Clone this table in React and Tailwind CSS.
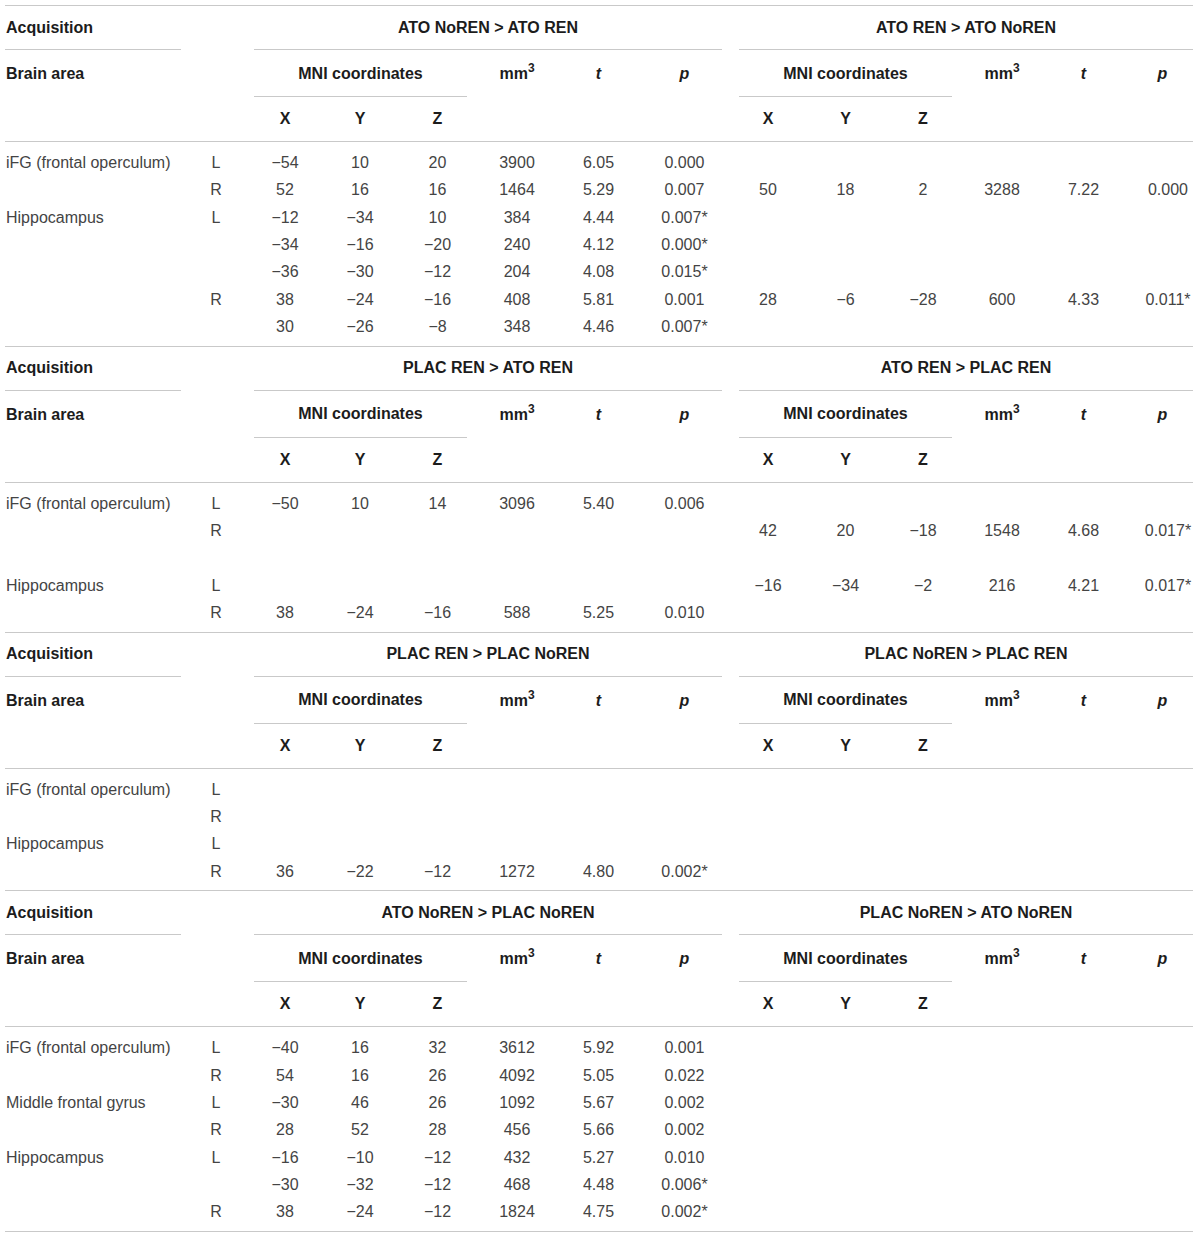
import React from 'react';

const cols = 'grid grid-cols-[184px_64px_74px_76px_79px_80px_83px_89px_78px_77px_78px_80px_83px_75px]';
const M = '\u2212';

const sections = [
  {
    left: 'ATO NoREN > ATO REN',
    right: 'ATO REN > ATO NoREN',
    rows: [
      ['iFG (frontal operculum)', 'L', `${M}54`, '10', '20', '3900', '6.05', '0.000', '', '', '', '', '', ''],
      ['', 'R', '52', '16', '16', '1464', '5.29', '0.007', '50', '18', '2', '3288', '7.22', '0.000'],
      ['Hippocampus', 'L', `${M}12`, `${M}34`, '10', '384', '4.44', '0.007*', '', '', '', '', '', ''],
      ['', '', `${M}34`, `${M}16`, `${M}20`, '240', '4.12', '0.000*', '', '', '', '', '', ''],
      ['', '', `${M}36`, `${M}30`, `${M}12`, '204', '4.08', '0.015*', '', '', '', '', '', ''],
      ['', 'R', '38', `${M}24`, `${M}16`, '408', '5.81', '0.001', '28', `${M}6`, `${M}28`, '600', '4.33', '0.011*'],
      ['', '', '30', `${M}26`, `${M}8`, '348', '4.46', '0.007*', '', '', '', '', '', ''],
    ],
  },
  {
    left: 'PLAC REN > ATO REN',
    right: 'ATO REN > PLAC REN',
    rows: [
      ['iFG (frontal operculum)', 'L', `${M}50`, '10', '14', '3096', '5.40', '0.006', '', '', '', '', '', ''],
      ['', 'R', '', '', '', '', '', '', '42', '20', `${M}18`, '1548', '4.68', '0.017*'],
      ['', '', '', '', '', '', '', '', '', '', '', '', '', ''],
      ['Hippocampus', 'L', '', '', '', '', '', '', `${M}16`, `${M}34`, `${M}2`, '216', '4.21', '0.017*'],
      ['', 'R', '38', `${M}24`, `${M}16`, '588', '5.25', '0.010', '', '', '', '', '', ''],
    ],
  },
  {
    left: 'PLAC REN > PLAC NoREN',
    right: 'PLAC NoREN > PLAC REN',
    rows: [
      ['iFG (frontal operculum)', 'L', '', '', '', '', '', '', '', '', '', '', '', ''],
      ['', 'R', '', '', '', '', '', '', '', '', '', '', '', ''],
      ['Hippocampus', 'L', '', '', '', '', '', '', '', '', '', '', '', ''],
      ['', 'R', '36', `${M}22`, `${M}12`, '1272', '4.80', '0.002*', '', '', '', '', '', ''],
    ],
  },
  {
    left: 'ATO NoREN > PLAC NoREN',
    right: 'PLAC NoREN > ATO NoREN',
    rows: [
      ['iFG (frontal operculum)', 'L', `${M}40`, '16', '32', '3612', '5.92', '0.001', '', '', '', '', '', ''],
      ['', 'R', '54', '16', '26', '4092', '5.05', '0.022', '', '', '', '', '', ''],
      ['Middle frontal gyrus', 'L', `${M}30`, '46', '26', '1092', '5.67', '0.002', '', '', '', '', '', ''],
      ['', 'R', '28', '52', '28', '456', '5.66', '0.002', '', '', '', '', '', ''],
      ['Hippocampus', 'L', `${M}16`, `${M}10`, `${M}12`, '432', '5.27', '0.010', '', '', '', '', '', ''],
      ['', '', `${M}30`, `${M}32`, `${M}12`, '468', '4.48', '0.006*', '', '', '', '', '', ''],
      ['', 'R', '38', `${M}24`, `${M}12`, '1824', '4.75', '0.002*', '', '', '', '', '', ''],
    ],
  },
];

const Rule = () => <div className="ml-[5px] mr-[7px] h-px bg-[#c9c9c9]" />;

// three-column stat header (mm3 / t / p)
const StatHeads = () => (
  <>
    <div className="flex items-center justify-center">
      mm<sup className="text-[12px]">3</sup>
    </div>
    <div className="flex items-center justify-center italic">t</div>
    <div className="flex items-center justify-center italic">p</div>
  </>
);

const Section = ({ section }) => (
  <div>
    <Rule />

    {/* Acquisition / comparison titles */}
    <div className={`${cols} h-[44px] font-bold text-[#1c1c1c]`}>
      <div className="ml-[5px] mr-[3px] pl-px flex items-center border-b border-[#c9c9c9]">Acquisition</div>
      <div />
      <div className="col-span-6 ml-[6px] mr-[7px] flex items-center justify-center border-b border-[#c9c9c9]">
        {section.left}
      </div>
      <div className="col-span-6 ml-[10px] mr-[7px] flex items-center justify-center border-b border-[#c9c9c9]">
        {section.right}
      </div>
    </div>

    {/* Brain area / MNI coordinates */}
    <div className={`${cols} h-[47px] pt-px font-bold text-[#1c1c1c]`}>
      <div className="pl-[6px] flex items-center">Brain area</div>
      <div />
      <div className="col-span-3 ml-[6px] mr-[10px] flex items-center justify-center border-b border-[#c9c9c9]">
        MNI coordinates
      </div>
      <StatHeads />
      <div className="col-span-3 ml-[10px] mr-[10px] flex items-center justify-center border-b border-[#c9c9c9]">
        MNI coordinates
      </div>
      <StatHeads />
    </div>

    {/* X Y Z */}
    <div className={`${cols} h-[44px] font-bold text-[#1c1c1c]`}>
      <div />
      <div />
      {['X', 'Y', 'Z', '', '', '', 'X', 'Y', 'Z', '', '', ''].map((h, i) => (
        <div key={i} className="flex items-center justify-center">{h}</div>
      ))}
    </div>

    <Rule />

    <div className="pt-[7.5px] pb-[5px] text-[#444444]">
      {section.rows.map((row, r) => (
        <div key={r} className={`${cols} h-[27.3px]`}>
          {row.map((cell, c) => (
            <div
              key={c}
              className={
                c === 0
                  ? 'pl-[6px] flex items-center whitespace-nowrap'
                  : c === 13
                  ? 'pl-[11px] flex items-center justify-center whitespace-nowrap'
                  : 'flex items-center justify-center whitespace-nowrap'
              }
            >
              {cell}
            </div>
          ))}
        </div>
      ))}
    </div>
  </div>
);

export default function App() {
  return (
    <div className="w-[1200px] h-[1239px] bg-white pt-[5px] text-[16px] leading-none font-['Liberation_Sans',Arial,sans-serif]">
      {sections.map((s, i) => (
        <Section key={i} section={s} />
      ))}
      <Rule />
    </div>
  );
}
